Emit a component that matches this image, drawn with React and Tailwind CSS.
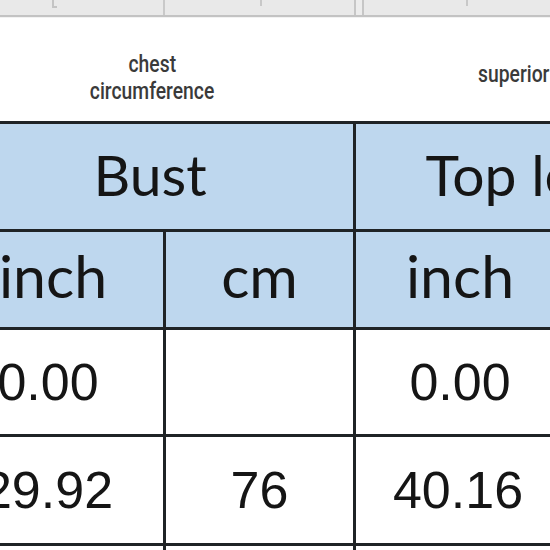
import React from "react";

const num = { fontFamily: '"Liberation Sans", Arial, sans-serif' };
const head = { fontFamily: 'Lato, "Open Sans", sans-serif' };
const cap = { fontFamily: 'Roboto, "Noto Sans", sans-serif' };

function Cell({ children, className = "", style }) {
  return (
    <div className={"flex items-center justify-center overflow-hidden whitespace-nowrap text-[#151515] " + className} style={style}>
      {children}
    </div>
  );
}

export default function App() {
  return (
    <div className="relative w-[550px] h-[550px] overflow-hidden bg-white">
      {/* top grey band (spreadsheet fragment) */}
      <div className="flex h-[15px] bg-[#e9e9e9]">
        <div className="w-[163px] shrink-0 flex items-start pl-[52px]">
          <div className="w-[5px] h-[8px] border-l-2 border-b-2 border-[#c4c4c4]" />
        </div>
        <div className="w-[2px] shrink-0 bg-[#c9c9c9]" />
        <div className="w-[189px] shrink-0 flex justify-center pl-[2px]">
          <div className="w-[2px] h-[6px] bg-[#c8c8c8]" />
        </div>
        <div className="w-[2px] shrink-0 bg-[#c6c6c6]" />
        <div className="w-[6px] shrink-0 bg-[#ececec]" />
        <div className="w-[2px] shrink-0 bg-[#c6c6c6]" />
        <div className="flex-1 flex pl-[102px]">
          <div className="w-[2px] h-[6px] bg-[#c8c8c8]" />
        </div>
      </div>
      <div className="h-[2px] bg-[#c3c3c3]" />
      <div className="h-[1px] bg-[#f2f2f2]" />

      {/* captions */}
      <div className="flex h-[103px] text-[#3a3a3a]" style={cap}>
        <div className="w-[304px] shrink-0 flex flex-col items-center justify-center pt-[17px] text-[23px] leading-[27px] font-medium">
          <span className="inline-block scale-x-[0.84]">chest</span>
          <span className="inline-block scale-x-[0.84]">circumference</span>
        </div>
        <div className="shrink-0 flex items-center pl-[174px] pt-[11px] text-[23px] font-medium whitespace-nowrap">
          <span className="inline-block origin-left scale-x-[0.84]">superior length</span>
        </div>
      </div>

      {/* table */}
      <div
        className="ml-[-58px] w-[900px] grid gap-[3px] bg-[#1f2326] p-[3px] pr-0"
        style={{ gridTemplateColumns: "218px 187px 208px 191px 200px", gridTemplateRows: "105px 95px 104px 106px 60px" }}
      >
        <Cell className="col-span-2 bg-[#bed7ee] text-[57px] pb-[4px] pl-[2px]" style={head}>Bust</Cell>
        <Cell className="col-span-2 bg-[#bed7ee] text-[57px] pb-[4px]" style={head}>Top length</Cell>
        <Cell className="bg-[#bed7ee]" />

        <Cell className="bg-[#bed7ee] text-[59px] pb-[6px] pr-[2px]" style={head}>inch</Cell>
        <Cell className="bg-[#bed7ee] text-[59px] pb-[6px]" style={head}>cm</Cell>
        <Cell className="bg-[#bed7ee] text-[59px] pb-[6px]" style={head}>inch</Cell>
        <Cell className="bg-[#bed7ee] text-[59px] pb-[6px]" style={head}>cm</Cell>
        <Cell className="bg-[#bed7ee]" />

        <Cell className="bg-white text-[52px] pr-[12px]" style={num}>0.00</Cell>
        <Cell className="bg-white" />
        <Cell className="bg-white text-[52px]" style={num}>0.00</Cell>
        <Cell className="bg-white" />
        <Cell className="bg-white" />

        <Cell className="bg-white text-[52px] pr-[12px]" style={num}>29.92</Cell>
        <Cell className="bg-white text-[52px]" style={num}>76</Cell>
        <Cell className="bg-white text-[52px] pr-[4px]" style={num}>40.16</Cell>
        <Cell className="bg-white text-[52px]" style={num}>102</Cell>
        <Cell className="bg-white" />

        <Cell className="bg-white" />
        <Cell className="bg-white" />
        <Cell className="bg-white" />
        <Cell className="bg-white" />
        <Cell className="bg-white" />
      </div>
    </div>
  );
}
